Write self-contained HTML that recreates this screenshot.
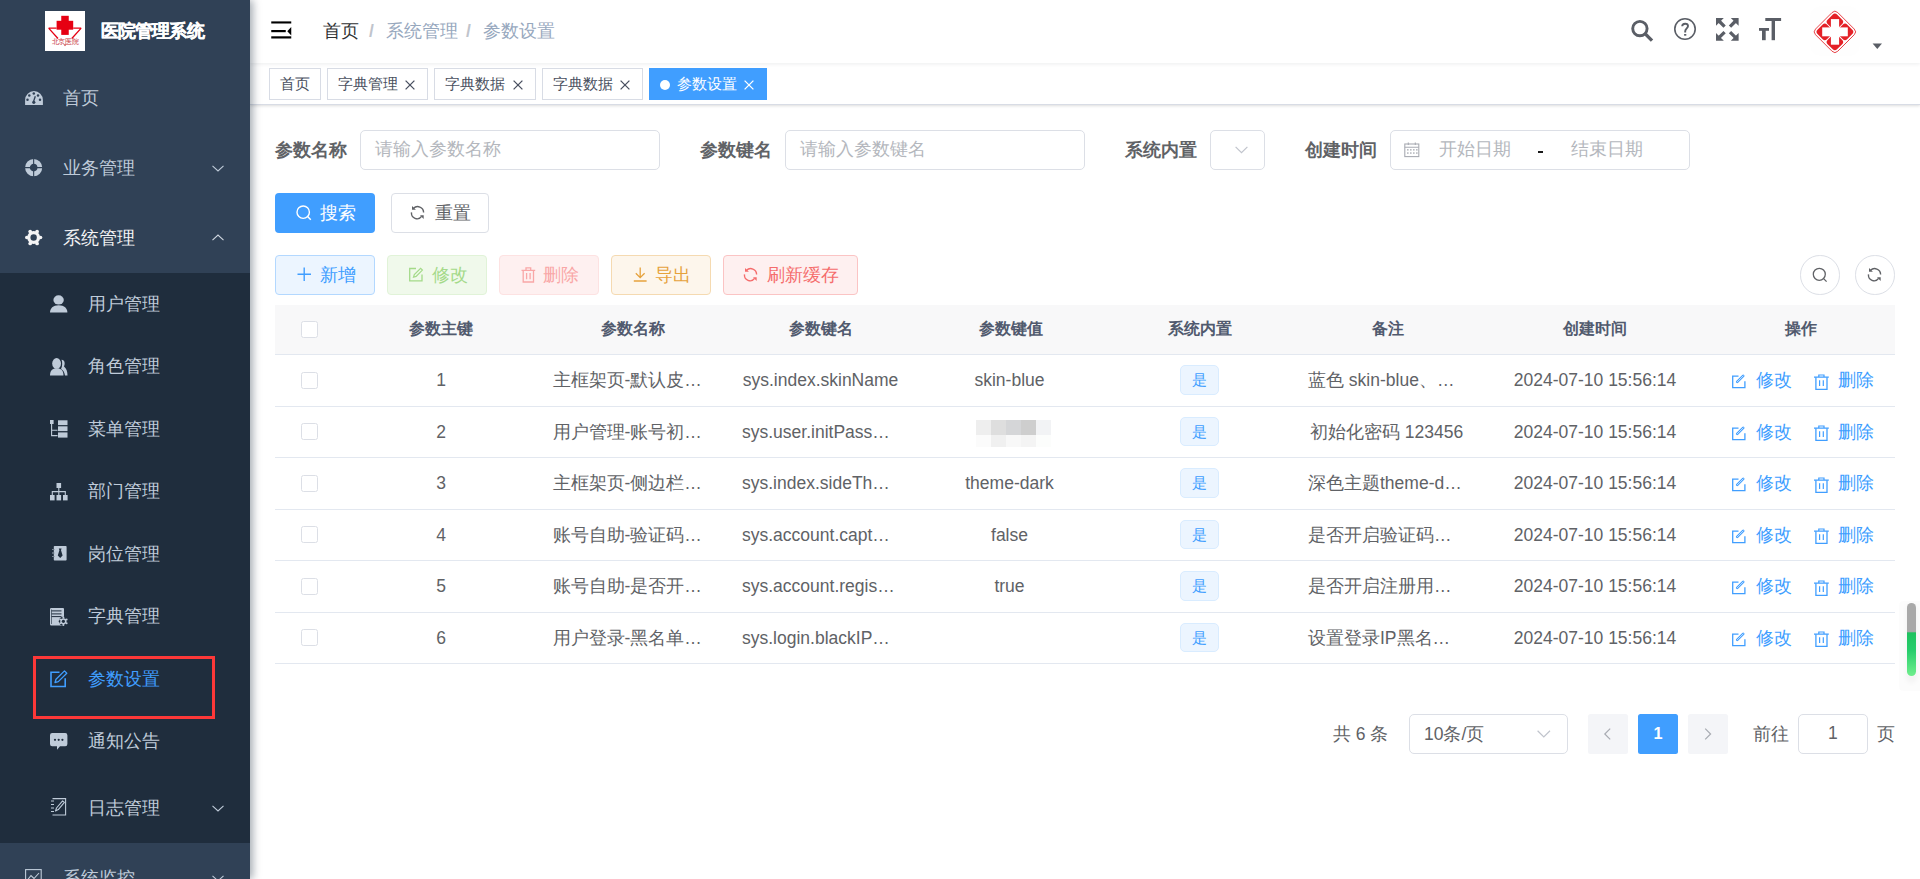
<!DOCTYPE html>
<html><head><meta charset="utf-8">
<style>
*{box-sizing:border-box;margin:0;padding:0}
html,body{width:1920px;height:879px;overflow:hidden;background:#fff;font-family:"Liberation Sans",sans-serif;}
.a{position:absolute;white-space:nowrap}
svg{position:absolute;overflow:visible}
#sb{position:absolute;left:0;top:0;width:250px;height:879px;background:#304156;box-shadow:2.5px 0 8px rgba(0,21,41,.35);z-index:5;overflow:hidden}
.mt{position:absolute;font-size:17.5px;color:#bfcbd9;line-height:20px;white-space:nowrap}
#main{position:absolute;left:0;top:0;width:1920px;height:879px}
.tag{position:absolute;top:67.5px;height:32.5px;border:1px solid #d8dce5;color:#495060;background:#fff;font-size:15px;line-height:30px;white-space:nowrap}
.tag span{position:absolute;top:0}
.lbl{position:absolute;font-size:17.5px;font-weight:bold;color:#606266;line-height:20px;white-space:nowrap}
.inp{position:absolute;height:40px;border:1px solid #dcdfe6;border-radius:5px;background:#fff}
.ph{position:absolute;font-size:17.5px;color:#b4b7bd;line-height:20px;white-space:nowrap}
.btn{position:absolute;top:255px;height:39.5px;border:1px solid;border-radius:4px}
.bt{position:absolute;font-size:17.5px;line-height:20px;white-space:nowrap}
.th{position:absolute;font-size:16.25px;font-weight:bold;color:#515a6e;line-height:20px;white-space:nowrap;transform:translateX(-50%)}
.td{position:absolute;font-size:17.5px;color:#606266;line-height:20px;white-space:nowrap;transform:translateX(-50%)}
.hl{position:absolute;left:275px;width:1620px;height:1px;background:#e3e8f0}
.cb{position:absolute;left:301px;width:17px;height:17px;border:1px solid #dcdfe6;border-radius:2.5px;background:#fff}
.yes{position:absolute;left:1180px;width:38.5px;height:29.5px;background:#ecf5ff;border:1px solid #d9ecff;border-radius:5px;color:#409eff;font-size:15px;line-height:27px;text-align:center}
.lk{position:absolute;font-size:17.5px;color:#409eff;line-height:20px;white-space:nowrap}
</style></head><body>
<div id="sb">
  <!-- logo -->
  <svg style="left:45px;top:11px" width="40" height="40" viewBox="0 0 40 40">
    <rect x="0" y="0" width="40" height="40" fill="#fff"/>
    <rect x="16.25" y="4.8" width="7.5" height="19.1" fill="#e60012"/>
    <rect x="11.6" y="9.8" width="16.6" height="8.9" fill="#e60012"/>
    <path d="M3.6 17.1 L11.6 17.1 M28.2 17.1 L36.2 17.1 M3.6 17.1 L13 27.5 M36.2 17.1 L26.8 27.5" stroke="#e60012" stroke-width="1.3" fill="none"/>
    <text x="6.5" y="32.6" font-size="6.8" fill="#c8353b" font-family="Liberation Sans, sans-serif" textLength="27">北京医院</text>
    <path d="M18.8 33.6 L21.2 33.6 L20 35.2 Z" fill="#c0272d"/>
  </svg>
  <div class="a" style="left:100.5px;top:20.5px;font-size:17.5px;font-weight:bold;color:#fff;line-height:20px;letter-spacing:-0.8px;-webkit-text-stroke:0.3px #fff">医院管理系统</div>

  <!-- 首页 -->
  <svg style="left:25px;top:90.8px" width="18" height="14" viewBox="0 0 18 14">
    <path d="M0.1 14 L0.1 9 A8.9 8.9 0 0 1 17.9 9 L17.9 14 Z" fill="#bfcbd9"/>
    <circle cx="2.5" cy="8.7" r="1.25" fill="#304156"/>
    <circle cx="4.3" cy="4.4" r="1.25" fill="#304156"/>
    <circle cx="8.8" cy="2.6" r="1.25" fill="#304156"/>
    <circle cx="13" cy="4.4" r="1.25" fill="#304156"/>
    <circle cx="15" cy="8.7" r="1.25" fill="#304156"/>
    <path d="M8.3 11.3 L10.3 5.2" stroke="#304156" stroke-width="1.3"/>
    <circle cx="8.8" cy="11.3" r="1.6" fill="#304156"/>
  </svg>
  <div class="mt" style="left:63px;top:87.5px">首页</div>

  <!-- 业务管理 -->
  <svg style="left:25px;top:158.9px" width="18" height="18" viewBox="0 0 18 18">
    <circle cx="8.65" cy="8.6" r="6.2" fill="none" stroke="#bfcbd9" stroke-width="4.8"/>
    <path d="M8.65 0 V18 M0 8.6 H18" stroke="#304156" stroke-width="1.1"/>
  </svg>
  <div class="mt" style="left:63px;top:157.5px">业务管理</div>
  <svg style="left:211.5px;top:164.5px" width="12" height="7" viewBox="0 0 12 7"><path d="M0.5 0.8 L6 6 L11.5 0.8" fill="none" stroke="#bfcbd9" stroke-width="1.1"/></svg>

  <!-- 系统管理 -->
  <svg style="left:25px;top:229px" width="18" height="18" viewBox="0 0 18 18">
    <g fill="#f4f4f5">
      <circle cx="8.65" cy="8.5" r="6.5"/>
      <circle cx="1.75" cy="8.5" r="1.75"/><circle cx="15.55" cy="8.5" r="1.75"/>
      <circle cx="5.2" cy="2.5" r="1.85"/><circle cx="12.1" cy="2.5" r="1.85"/>
      <circle cx="5.2" cy="14.5" r="1.85"/><circle cx="12.1" cy="14.5" r="1.85"/>
    </g>
    <circle cx="8.65" cy="8.5" r="3.2" fill="#304156"/>
  </svg>
  <div class="mt" style="left:63px;top:227.5px;color:#f4f4f5">系统管理</div>
  <svg style="left:211.5px;top:234px" width="12" height="7" viewBox="0 0 12 7"><path d="M0.5 6.2 L6 1 L11.5 6.2" fill="none" stroke="#d0d7e0" stroke-width="1.1"/></svg>

  <div class="a" style="left:0;top:272.5px;width:250px;height:570px;background:#1f2d3d"></div>

  <!-- 用户管理 -->
  <svg style="left:50px;top:294.5px" width="18" height="18" viewBox="0 0 18 18">
    <ellipse cx="8.6" cy="4.9" rx="5.2" ry="4.6" fill="#bfcbd9"/>
    <path d="M0 17.5 C0 13.5 3 10.3 8.7 10.3 C14.4 10.3 17.4 13.5 17.4 17.5 Z" fill="#bfcbd9"/>
  </svg>
  <div class="mt" style="left:87.5px;top:293.75px">用户管理</div>

  <!-- 角色管理 -->
  <svg style="left:50px;top:357.5px" width="18" height="18" viewBox="0 0 18 18">
    <path d="M11.5 1.8 C14.5 1.5 15.5 5.5 14 8.5 C16.5 10.5 17.5 13.5 17.5 17.5 L15 17.5 C14.5 14 13 12 11 11 C12.5 8.5 12.5 4 11.5 1.8 Z" fill="#bfcbd9"/>
    <ellipse cx="6.6" cy="5.4" rx="4.4" ry="5.3" fill="#bfcbd9"/>
    <path d="M0 17.5 C0 12.5 2.5 10.3 6.8 10.3 C11 10.3 13.5 12.5 13.5 17.5 Z" fill="#bfcbd9"/>
  </svg>
  <div class="mt" style="left:87.5px;top:356.25px">角色管理</div>

  <!-- 菜单管理 -->
  <svg style="left:50px;top:419.5px" width="18" height="18" viewBox="0 0 18 18">
    <rect x="0" y="0" width="3.6" height="4" fill="#bfcbd9"/>
    <path d="M1.6 4 V15.6 H7.5 M1.6 10.2 H7.5" stroke="#bfcbd9" stroke-width="1.1" fill="none"/>
    <rect x="8" y="0.3" width="9.5" height="4.8" fill="#bfcbd9"/>
    <rect x="8" y="6.3" width="9.5" height="4.8" fill="#bfcbd9"/>
    <rect x="8" y="12.4" width="9.5" height="5.2" fill="#bfcbd9"/>
  </svg>
  <div class="mt" style="left:87.5px;top:418.75px">菜单管理</div>

  <!-- 部门管理 -->
  <svg style="left:50px;top:482.5px" width="18" height="18" viewBox="0 0 18 18">
    <rect x="6.5" y="0" width="4.6" height="5" fill="#bfcbd9"/>
    <path d="M8.8 5 V8.6 M2.3 12 V8.6 H15.3 V12 M8.8 8.6 V12" stroke="#bfcbd9" stroke-width="1.1" fill="none"/>
    <rect x="0" y="12" width="4.6" height="5.4" fill="#bfcbd9"/>
    <rect x="6.5" y="12" width="4.6" height="5.4" fill="#bfcbd9"/>
    <rect x="13" y="12" width="4.6" height="5.4" fill="#bfcbd9"/>
  </svg>
  <div class="mt" style="left:87.5px;top:481.25px">部门管理</div>

  <!-- 岗位管理 -->
  <svg style="left:51.8px;top:546.3px" width="15" height="15" viewBox="0 0 15 15">
    <rect x="1.8" y="0" width="12.8" height="14.5" rx="0.8" fill="#bfcbd9"/>
    <path d="M0 3.5 h3 M0 7 h3 M0 10.5 h3" stroke="#bfcbd9" stroke-width="1.2"/>
    <path d="M0.2 3.5 h2.2 M0.2 7 h2.2 M0.2 10.5 h2.2" stroke="#1f2d3d" stroke-width="0.5"/>
    <path d="M6.8 2.5 h2.8 l-0.6 1.8 l1.6 5.2 l-2.4 2.6 l-2.4 -2.6 l1.6 -5.2 Z" fill="#1f2d3d"/>
  </svg>
  <div class="mt" style="left:87.5px;top:543.75px">岗位管理</div>

  <!-- 字典管理 -->
  <svg style="left:50px;top:607.6px" width="18" height="18" viewBox="0 0 18 18">
    <path d="M1.2 0 H13 A1 1 0 0 1 14 1 V17.4 H1.2 A1.2 1.2 0 0 1 0 16.2 V1.2 A1.2 1.2 0 0 1 1.2 0 Z" fill="#bfcbd9"/>
    <path d="M1.5 2.9 H11.5 M1.5 5.9 H11.5 M1.5 8.6 H11.5" stroke="#1f2d3d" stroke-width="1"/>
    <path d="M1.5 1.5 V16" stroke="#1f2d3d" stroke-width="0.6"/>
    <circle cx="13.4" cy="13.3" r="4.6" fill="#1f2d3d"/>
    <g fill="#bfcbd9">
      <circle cx="13.4" cy="13.3" r="3.1"/>
      <circle cx="13.4" cy="9.6" r="1"/><circle cx="13.4" cy="17" r="1"/>
      <circle cx="10.2" cy="11.45" r="1"/><circle cx="16.6" cy="11.45" r="1"/>
      <circle cx="10.2" cy="15.15" r="1"/><circle cx="16.6" cy="15.15" r="1"/>
    </g>
    <circle cx="13.4" cy="13.3" r="1.6" fill="#1f2d3d"/>
  </svg>
  <div class="mt" style="left:87.5px;top:606.25px">字典管理</div>

  <!-- 参数设置 (active) -->
  <svg style="left:50px;top:670.3px" width="18" height="18" viewBox="0 0 18 18">
    <path d="M9.5 2.3 H1 V16.5 H15.2 V8.2" fill="none" stroke="#409eff" stroke-width="1.6"/>
    <path d="M5 12.5 L6 9.3 L14.5 0.9 L16.8 3.2 L8.3 11.6 Z" fill="none" stroke="#409eff" stroke-width="1.3" stroke-linejoin="round"/>
  </svg>
  <div class="mt" style="left:88px;top:668.75px;color:#409eff">参数设置</div>

  <!-- 通知公告 -->
  <svg style="left:50px;top:733px" width="18" height="18" viewBox="0 0 18 18">
    <path d="M2.2 0 H15.2 A2.2 2.2 0 0 1 17.4 2.2 V11 A2.2 2.2 0 0 1 15.2 13.2 H10 L7 16.8 V13.2 H2.2 A2.2 2.2 0 0 1 0 11 V2.2 A2.2 2.2 0 0 1 2.2 0 Z" fill="#bfcbd9"/>
    <circle cx="5" cy="6.8" r="1.1" fill="#1f2d3d"/><circle cx="8.7" cy="6.8" r="1.1" fill="#1f2d3d"/><circle cx="12.4" cy="6.8" r="1.1" fill="#1f2d3d"/>
  </svg>
  <div class="mt" style="left:87.5px;top:731.25px">通知公告</div>

  <!-- 日志管理 -->
  <svg style="left:50.6px;top:798.4px" width="16" height="18" viewBox="0 0 16 18">
    <path d="M1.5 0.6 H14.6 V17 H1.5" fill="none" stroke="#bfcbd9" stroke-width="1.1"/>
    <path d="M0 3 h3 M0 6.5 h3 M0 10 h3 M0 13.5 h3" stroke="#bfcbd9" stroke-width="1"/>
    <path d="M4.5 13 L5.5 10 L11.6 2.8 L13.4 4.4 L7.3 11.6 Z" fill="none" stroke="#bfcbd9" stroke-width="1.1" stroke-linejoin="round"/>
  </svg>
  <div class="mt" style="left:88px;top:797.5px">日志管理</div>
  <svg style="left:211.5px;top:804.5px" width="12" height="7" viewBox="0 0 12 7"><path d="M0.5 0.8 L6 6 L11.5 0.8" fill="none" stroke="#bfcbd9" stroke-width="1.1"/></svg>

  <!-- 系统监控 -->
  <svg style="left:25px;top:869px" width="17" height="17" viewBox="0 0 17 17">
    <rect x="0.6" y="0.6" width="15.6" height="15.6" fill="none" stroke="#bfcbd9" stroke-width="1.1"/>
    <path d="M2.5 11 L6 6.5 L9 9.5 L14 4" fill="none" stroke="#bfcbd9" stroke-width="1.1"/>
  </svg>
  <div class="mt" style="left:63px;top:867.5px">系统监控</div>
  <svg style="left:211.5px;top:874.5px" width="12" height="7" viewBox="0 0 12 7"><path d="M0.5 0.8 L6 6 L11.5 0.8" fill="none" stroke="#bfcbd9" stroke-width="1.1"/></svg>

  <!-- red annotation -->
  <div class="a" style="left:32.8px;top:656px;width:182.3px;height:63px;border:3px solid #fd3838"></div>
</div>
<div id="main">
  <div class="a" style="left:250px;top:62.5px;width:1670px;height:42.5px;background:#fff;border-bottom:1px solid #d8dce5;box-shadow:0 1px 3px 0 rgba(0,0,0,.12),0 0 3px 0 rgba(0,0,0,.04)"></div>
  <div class="a" style="left:250px;top:0;width:1670px;height:62.5px;background:#fff;box-shadow:0 1px 4px rgba(0,21,41,.08)"></div>
  <!-- navbar -->
  <svg style="left:271px;top:20.5px" width="21" height="18" viewBox="0 0 21 18">
    <rect x="0.25" y="0.4" width="20" height="2.1" fill="#000"/>
    <rect x="0.25" y="9" width="14.5" height="2.2" fill="#000"/>
    <path d="M20.25 5.9 V14.5 L16.3 10.2 Z" fill="#000"/>
    <rect x="0.25" y="15.3" width="20" height="2.2" fill="#000"/>
  </svg>
  <div class="a" style="left:322.5px;top:20.5px;font-size:17.5px;line-height:20px;color:#303133">首页</div>
  <div class="a" style="left:369px;top:20.5px;font-size:17.5px;line-height:20px;color:#c0c4cc;font-weight:bold">/</div>
  <div class="a" style="left:385.5px;top:20.5px;font-size:17.5px;line-height:20px;color:#97a8be">系统管理</div>
  <div class="a" style="left:466px;top:20.5px;font-size:17.5px;line-height:20px;color:#c0c4cc;font-weight:bold">/</div>
  <div class="a" style="left:482.5px;top:20.5px;font-size:17.5px;line-height:20px;color:#97a8be">参数设置</div>

  <!-- right icons -->
  <svg style="left:1630px;top:19px" width="24" height="24" viewBox="0 0 24 24">
    <circle cx="9.9" cy="9.6" r="7.2" fill="none" stroke="#5a5e66" stroke-width="2.9"/>
    <path d="M14.8 14.4 L22 21.6" stroke="#5a5e66" stroke-width="3.4"/>
  </svg>
  <svg style="left:1673px;top:17px" width="24" height="24" viewBox="0 0 24 24">
    <circle cx="12" cy="12" r="10.2" fill="none" stroke="#5a5e66" stroke-width="1.6"/>
    <path d="M9.2 9.3 C9.2 7.6 10.4 6.7 12.2 6.7 C14 6.7 15 7.8 15 9.1 C15 11.2 12.2 11.6 12.2 14.2 V15.6" fill="none" stroke="#5a5e66" stroke-width="1.9"/>
    <rect x="11.1" y="17" width="2.2" height="1.7" fill="#5a5e66"/>
  </svg>
  <svg style="left:1715.8px;top:18px" width="24" height="23" viewBox="0 0 24 23">
    <g fill="#5a5e66">
      <path d="M0 0 H7.8 L0 7.8 Z"/><path d="M22.6 0 H14.8 L22.6 7.8 Z"/>
      <path d="M0 22.7 H7.8 L0 14.9 Z"/><path d="M22.6 22.7 H14.8 L22.6 14.9 Z"/>
    </g>
    <path d="M3 3 L8.6 8.6 M19.6 3 L14 8.6 M3 19.7 L8.6 14.1 M19.6 19.7 L14 14.1" stroke="#5a5e66" stroke-width="3.3"/>
  </svg>
  <svg style="left:1759px;top:18px" width="23" height="23" viewBox="0 0 23 23">
    <g fill="#5a5e66">
      <rect x="6.3" y="0" width="15.8" height="3"/>
      <rect x="12.6" y="0" width="3.4" height="22.2"/>
      <rect x="0" y="10" width="10" height="2.8"/>
      <rect x="3" y="10" width="3.7" height="12.2"/>
    </g>
  </svg>
  <!-- avatar -->
  <div class="a" style="left:1810px;top:6px;width:50px;height:50px;border-radius:12px;background:#fefefe"></div>
  <svg style="left:1810px;top:6px" width="50" height="50" viewBox="0 0 50 50">
    <g transform="rotate(45 24.9 25.9)">
      <rect x="9.2" y="10.2" width="31.4" height="31.4" rx="4" fill="none" stroke="#e42127" stroke-width="0.8"/>
      <g fill="#e42127">
        <rect x="11.1" y="12.1" width="13.3" height="13.3" rx="3"/>
        <rect x="25.4" y="12.1" width="13.3" height="13.3" rx="3"/>
        <rect x="11.1" y="26.4" width="13.3" height="13.3" rx="3"/>
        <rect x="25.4" y="26.4" width="13.3" height="13.3" rx="3"/>
      </g>
    </g>
    <rect x="20.9" y="13.1" width="8.2" height="25.6" fill="#fff"/>
    <rect x="12.2" y="21.4" width="25.6" height="8.9" fill="#fff"/>
  </svg>
  <svg style="left:1872px;top:42.5px" width="11" height="7" viewBox="0 0 11 7"><path d="M0.6 0.5 H10 L5.3 5.9 Z" fill="#5a5e66"/></svg>

  <!-- tags view -->
  <div class="tag" style="left:269px;width:52px"><span style="left:10px">首页</span></div>
  <div class="tag" style="left:327px;width:101px"><span style="left:10px">字典管理</span></div>
  <div class="tag" style="left:434px;width:102px"><span style="left:10px">字典数据</span></div>
  <div class="tag" style="left:542px;width:101px"><span style="left:10px">字典数据</span></div>
  <div class="tag" style="left:649px;width:118px;background:#409eff;border-color:#409eff;color:#fff"><span style="left:27px">参数设置</span>
    <div class="a" style="left:9.5px;top:11.2px;width:10px;height:10px;border-radius:50%;background:#fff"></div>
  </div>
  <svg style="left:404.5px;top:79.5px" width="10" height="10" viewBox="0 0 10 10"><path d="M0.6 0.6 L9.4 9.4 M9.4 0.6 L0.6 9.4" stroke="#495060" stroke-width="1.3"/></svg>
  <svg style="left:512.5px;top:79.5px" width="10" height="10" viewBox="0 0 10 10"><path d="M0.6 0.6 L9.4 9.4 M9.4 0.6 L0.6 9.4" stroke="#495060" stroke-width="1.3"/></svg>
  <svg style="left:619.5px;top:79.5px" width="10" height="10" viewBox="0 0 10 10"><path d="M0.6 0.6 L9.4 9.4 M9.4 0.6 L0.6 9.4" stroke="#495060" stroke-width="1.3"/></svg>
  <svg style="left:743.5px;top:79.5px" width="10" height="10" viewBox="0 0 10 10"><path d="M0.6 0.6 L9.4 9.4 M9.4 0.6 L0.6 9.4" stroke="#fff" stroke-width="1.3"/></svg>
  <!-- search form -->
  <div class="lbl" style="left:275px;top:140px">参数名称</div>
  <div class="inp" style="left:360px;top:130px;width:300px"></div>
  <div class="ph" style="left:374.5px;top:139px">请输入参数名称</div>
  <div class="lbl" style="left:700px;top:140px">参数键名</div>
  <div class="inp" style="left:785px;top:130px;width:300px"></div>
  <div class="ph" style="left:799.5px;top:139px">请输入参数键名</div>
  <div class="lbl" style="left:1125px;top:140px">系统内置</div>
  <div class="inp" style="left:1210px;top:130px;width:55px"></div>
  <svg style="left:1235px;top:146px" width="13" height="8" viewBox="0 0 13 8"><path d="M0.6 0.8 L6.5 6.7 L12.4 0.8" fill="none" stroke="#c0c4cc" stroke-width="1.2"/></svg>
  <div class="lbl" style="left:1305px;top:140px">创建时间</div>
  <div class="inp" style="left:1390px;top:130px;width:300px"></div>
  <svg style="left:1403.5px;top:142px" width="16" height="16" viewBox="0 0 16 16">
    <rect x="0.8" y="2" width="14" height="12.6" fill="none" stroke="#a8abb2" stroke-width="1.1"/>
    <path d="M0.8 5.2 H14.8 M4.3 0.6 V3 M11.3 0.6 V3" stroke="#a8abb2" stroke-width="1.1"/>
    <g fill="#a8abb2"><rect x="3" y="7.2" width="1.6" height="1.3"/><rect x="6" y="7.2" width="1.6" height="1.3"/><rect x="9" y="7.2" width="1.6" height="1.3"/><rect x="12" y="7.2" width="1.6" height="1.3"/><rect x="3" y="10.4" width="1.6" height="1.3"/><rect x="6" y="10.4" width="1.6" height="1.3"/><rect x="9" y="10.4" width="1.6" height="1.3"/><rect x="12" y="10.4" width="1.6" height="1.3"/></g>
  </svg>
  <div class="ph" style="left:1438.5px;top:139px">开始日期</div>
  <div class="a" style="left:1537.5px;top:150.8px;width:5.5px;height:2.2px;background:#1a1a1a"></div>
  <div class="ph" style="left:1571px;top:139px">结束日期</div>

  <!-- search buttons -->
  <div class="a" style="left:275px;top:193px;width:100px;height:40px;background:#409eff;border-radius:4px"></div>
  <svg style="left:295.5px;top:205px" width="16" height="16" viewBox="0 0 16 16"><circle cx="7.2" cy="7.2" r="6.2" fill="none" stroke="#fff" stroke-width="1.4"/><path d="M11.6 11.6 L14.8 14.8" stroke="#fff" stroke-width="1.4"/></svg>
  <div class="bt" style="left:320px;top:203px;color:#fff">搜索</div>
  <div class="a" style="left:390.5px;top:193px;width:98px;height:40px;background:#fff;border:1px solid #dcdfe6;border-radius:4px"></div>
  <svg style="left:405.3px;top:199.8px" width="25" height="26" viewBox="0 0 25 26">
    <path d="M18.6 12.5 A5.9 5.9 0 0 0 8.4 8.5" fill="none" stroke="#606266" stroke-width="1.4"/>
    <path d="M7 6.1 V9.8 H10.9 Z" fill="#606266"/>
    <path d="M6.5 12.4 A5.6 5.6 0 0 0 16.6 16.4" fill="none" stroke="#606266" stroke-width="1.4"/>
    <path d="M15 15.3 H18.7 V19 Z" fill="#606266"/>
  </svg>
  <div class="bt" style="left:435px;top:203px;color:#606266">重置</div>

  <!-- toolbar buttons -->
  <div class="btn" style="left:275px;width:100px;background:#ecf5ff;border-color:#b3d8ff"></div>
  <svg style="left:296.5px;top:267px" width="15" height="15" viewBox="0 0 15 15"><path d="M7.2 0.5 V14 M0.5 7.2 H14" stroke="#409eff" stroke-width="1.4"/></svg>
  <div class="bt" style="left:320px;top:264.5px;color:#409eff">新增</div>

  <div class="btn" style="left:387px;width:100px;background:#f0f9eb;border-color:#e1f3d8"></div>
  <svg style="left:409px;top:267px" width="15" height="15" viewBox="0 0 15 15">
    <path d="M7 1.5 H0.7 V13.8 H13 V7.5" fill="none" stroke="#a4da89" stroke-width="1.3"/>
    <path d="M4.5 10.2 L5.3 7.6 L11.6 1.3 L13.4 3.1 L7.1 9.4 Z" fill="none" stroke="#a4da89" stroke-width="1.2"/>
  </svg>
  <div class="bt" style="left:432px;top:264.5px;color:#a4da89">修改</div>

  <div class="btn" style="left:499px;width:100px;background:#fef0f0;border-color:#fde2e2"></div>
  <svg style="left:520.5px;top:266.5px" width="15" height="16" viewBox="0 0 15 16">
    <path d="M0.5 3.3 H14.2 M5 3.3 V0.9 H9.7 V3.3" fill="none" stroke="#f9a7a7" stroke-width="1.3"/>
    <path d="M2.2 3.3 V15 H12.5 V3.3" fill="none" stroke="#f9a7a7" stroke-width="1.3"/>
    <path d="M5.6 6 V12.3 M9.1 6 V12.3" stroke="#f9a7a7" stroke-width="1.3"/>
  </svg>
  <div class="bt" style="left:543px;top:264.5px;color:#f9a7a7">删除</div>

  <div class="btn" style="left:611px;width:100px;background:#fdf6ec;border-color:#f5dab1"></div>
  <svg style="left:632.5px;top:267px" width="15" height="15" viewBox="0 0 15 15">
    <path d="M7.2 0.5 V10.5 M2.8 6.3 L7.2 10.6 L11.6 6.3 M0.8 14 H13.6" fill="none" stroke="#e6a23c" stroke-width="1.3"/>
  </svg>
  <div class="bt" style="left:655px;top:264.5px;color:#e6a23c">导出</div>

  <div class="btn" style="left:723px;width:135px;background:#fef0f0;border-color:#fbc4c4"></div>
  <svg style="left:738px;top:261.5px" width="25" height="26" viewBox="0 0 25 26">
    <path d="M18.6 12.5 A5.9 5.9 0 0 0 8.4 8.5" fill="none" stroke="#f56c6c" stroke-width="1.4"/>
    <path d="M7 6.1 V9.8 H10.9 Z" fill="#f56c6c"/>
    <path d="M6.5 12.4 A5.6 5.6 0 0 0 16.6 16.4" fill="none" stroke="#f56c6c" stroke-width="1.4"/>
    <path d="M15 15.3 H18.7 V19 Z" fill="#f56c6c"/>
  </svg>
  <div class="bt" style="left:767px;top:264.5px;color:#f56c6c">刷新缓存</div>

  <!-- right circle buttons -->
  <div class="a" style="left:1800px;top:255px;width:39.5px;height:39.5px;border:1px solid #dcdfe6;border-radius:50%"></div>
  <svg style="left:1812px;top:267px" width="16" height="16" viewBox="0 0 16 16"><circle cx="7.3" cy="7.3" r="6" fill="none" stroke="#606266" stroke-width="1.3"/><path d="M11.6 11.6 L14.6 14.6" stroke="#606266" stroke-width="1.3"/></svg>
  <div class="a" style="left:1855px;top:255px;width:39.5px;height:39.5px;border:1px solid #dcdfe6;border-radius:50%"></div>
  <svg style="left:1861.8px;top:262px" width="25" height="26" viewBox="0 0 25 26">
    <path d="M18.6 12.5 A5.9 5.9 0 0 0 8.4 8.5" fill="none" stroke="#606266" stroke-width="1.4"/>
    <path d="M7 6.1 V9.8 H10.9 Z" fill="#606266"/>
    <path d="M6.5 12.4 A5.6 5.6 0 0 0 16.6 16.4" fill="none" stroke="#606266" stroke-width="1.4"/>
    <path d="M15 15.3 H18.7 V19 Z" fill="#606266"/>
  </svg>
  <!-- table -->
  <div class="a" style="left:275px;top:305px;width:1620px;height:49.5px;background:#f8f8f9"></div>
  <div class="cb" style="top:321px"></div>
  <div class="th" style="left:441px;top:318px">参数主键</div>
  <div class="th" style="left:632.5px;top:318px">参数名称</div>
  <div class="th" style="left:821px;top:318px">参数键名</div>
  <div class="th" style="left:1010.5px;top:318px">参数键值</div>
  <div class="th" style="left:1199.5px;top:318px">系统内置</div>
  <div class="th" style="left:1388px;top:318px">备注</div>
  <div class="th" style="left:1595px;top:318px">创建时间</div>
  <div class="th" style="left:1801px;top:318px">操作</div>
  <div class="hl" style="top:354px"></div>
  <div class="hl" style="top:405.5px"></div>
  <div class="hl" style="top:457px"></div>
  <div class="hl" style="top:508.5px"></div>
  <div class="hl" style="top:560px"></div>
  <div class="hl" style="top:611.5px"></div>
  <div class="hl" style="top:663px"></div>
  <div class="cb" style="top:371.5px"></div>
  <div class="td" style="left:441px;top:370.0px">1</div>
  <div class="td" style="left:552.5px;top:370.0px;transform:none">主框架页-默认皮…</div>
  <div class="td" style="left:820.5px;top:370.0px">sys.index.skinName</div>
  <div class="td" style="left:1009.5px;top:370.0px">skin-blue</div>
  <div class="td" style="left:1308px;top:370.0px;transform:none">蓝色 skin-blue、…</div>
  <div class="yes" style="top:365.0px">是</div>
  <div class="td" style="left:1595px;top:370.0px">2024-07-10 15:56:14</div>
  <svg style="left:1731.5px;top:374.0px" width="15" height="15" viewBox="0 0 15 15"><path d="M6.5 2.2 H0.7 V13.6 H12.9 V7.2" fill="none" stroke="#409eff" stroke-width="1.3"/><path d="M5.2 7.9 L11.2 1.9" stroke="#409eff" stroke-width="2.6" stroke-linecap="round"/><path d="M5.2 7.9 L11.2 1.9" stroke="#fff" stroke-width="0.7" stroke-linecap="round"/></svg>
  <div class="lk" style="left:1755.5px;top:370.0px">修改</div>
  <svg style="left:1813.5px;top:373.5px" width="15" height="15" viewBox="0 0 15 15"><path d="M0 3.2 H14.8 M4.8 3.2 V1 H10 V3.2" fill="none" stroke="#409eff" stroke-width="1.2"/><path d="M1.9 3.2 V15.4 H13 V3.2" fill="none" stroke="#409eff" stroke-width="1.3"/><path d="M5.6 6.3 V12 M9.3 6.3 V12" stroke="#409eff" stroke-width="1.2"/></svg>
  <div class="lk" style="left:1837.5px;top:370.0px">删除</div>
  <div class="cb" style="top:423.0px"></div>
  <div class="td" style="left:441px;top:421.5px">2</div>
  <div class="td" style="left:552.5px;top:421.5px;transform:none">用户管理-账号初…</div>
  <div class="td" style="left:742px;top:421.5px;transform:none">sys.user.initPass…</div>
  <div class="td" style="left:1386.5px;top:421.5px">初始化密码 123456</div>
  <div class="yes" style="top:416.5px">是</div>
  <div class="td" style="left:1595px;top:421.5px">2024-07-10 15:56:14</div>
  <svg style="left:1731.5px;top:425.5px" width="15" height="15" viewBox="0 0 15 15"><path d="M6.5 2.2 H0.7 V13.6 H12.9 V7.2" fill="none" stroke="#409eff" stroke-width="1.3"/><path d="M5.2 7.9 L11.2 1.9" stroke="#409eff" stroke-width="2.6" stroke-linecap="round"/><path d="M5.2 7.9 L11.2 1.9" stroke="#fff" stroke-width="0.7" stroke-linecap="round"/></svg>
  <div class="lk" style="left:1755.5px;top:421.5px">修改</div>
  <svg style="left:1813.5px;top:425.0px" width="15" height="15" viewBox="0 0 15 15"><path d="M0 3.2 H14.8 M4.8 3.2 V1 H10 V3.2" fill="none" stroke="#409eff" stroke-width="1.2"/><path d="M1.9 3.2 V15.4 H13 V3.2" fill="none" stroke="#409eff" stroke-width="1.3"/><path d="M5.6 6.3 V12 M9.3 6.3 V12" stroke="#409eff" stroke-width="1.2"/></svg>
  <div class="lk" style="left:1837.5px;top:421.5px">删除</div>
  <div class="cb" style="top:474.5px"></div>
  <div class="td" style="left:441px;top:473.0px">3</div>
  <div class="td" style="left:552.5px;top:473.0px;transform:none">主框架页-侧边栏…</div>
  <div class="td" style="left:742px;top:473.0px;transform:none">sys.index.sideTh…</div>
  <div class="td" style="left:1009.5px;top:473.0px">theme-dark</div>
  <div class="td" style="left:1308px;top:473.0px;transform:none">深色主题theme-d…</div>
  <div class="yes" style="top:468.0px">是</div>
  <div class="td" style="left:1595px;top:473.0px">2024-07-10 15:56:14</div>
  <svg style="left:1731.5px;top:477.0px" width="15" height="15" viewBox="0 0 15 15"><path d="M6.5 2.2 H0.7 V13.6 H12.9 V7.2" fill="none" stroke="#409eff" stroke-width="1.3"/><path d="M5.2 7.9 L11.2 1.9" stroke="#409eff" stroke-width="2.6" stroke-linecap="round"/><path d="M5.2 7.9 L11.2 1.9" stroke="#fff" stroke-width="0.7" stroke-linecap="round"/></svg>
  <div class="lk" style="left:1755.5px;top:473.0px">修改</div>
  <svg style="left:1813.5px;top:476.5px" width="15" height="15" viewBox="0 0 15 15"><path d="M0 3.2 H14.8 M4.8 3.2 V1 H10 V3.2" fill="none" stroke="#409eff" stroke-width="1.2"/><path d="M1.9 3.2 V15.4 H13 V3.2" fill="none" stroke="#409eff" stroke-width="1.3"/><path d="M5.6 6.3 V12 M9.3 6.3 V12" stroke="#409eff" stroke-width="1.2"/></svg>
  <div class="lk" style="left:1837.5px;top:473.0px">删除</div>
  <div class="cb" style="top:526.0px"></div>
  <div class="td" style="left:441px;top:524.5px">4</div>
  <div class="td" style="left:552.5px;top:524.5px;transform:none">账号自助-验证码…</div>
  <div class="td" style="left:742px;top:524.5px;transform:none">sys.account.capt…</div>
  <div class="td" style="left:1009.5px;top:524.5px">false</div>
  <div class="td" style="left:1308px;top:524.5px;transform:none">是否开启验证码…</div>
  <div class="yes" style="top:519.5px">是</div>
  <div class="td" style="left:1595px;top:524.5px">2024-07-10 15:56:14</div>
  <svg style="left:1731.5px;top:528.5px" width="15" height="15" viewBox="0 0 15 15"><path d="M6.5 2.2 H0.7 V13.6 H12.9 V7.2" fill="none" stroke="#409eff" stroke-width="1.3"/><path d="M5.2 7.9 L11.2 1.9" stroke="#409eff" stroke-width="2.6" stroke-linecap="round"/><path d="M5.2 7.9 L11.2 1.9" stroke="#fff" stroke-width="0.7" stroke-linecap="round"/></svg>
  <div class="lk" style="left:1755.5px;top:524.5px">修改</div>
  <svg style="left:1813.5px;top:528.0px" width="15" height="15" viewBox="0 0 15 15"><path d="M0 3.2 H14.8 M4.8 3.2 V1 H10 V3.2" fill="none" stroke="#409eff" stroke-width="1.2"/><path d="M1.9 3.2 V15.4 H13 V3.2" fill="none" stroke="#409eff" stroke-width="1.3"/><path d="M5.6 6.3 V12 M9.3 6.3 V12" stroke="#409eff" stroke-width="1.2"/></svg>
  <div class="lk" style="left:1837.5px;top:524.5px">删除</div>
  <div class="cb" style="top:577.5px"></div>
  <div class="td" style="left:441px;top:576.0px">5</div>
  <div class="td" style="left:552.5px;top:576.0px;transform:none">账号自助-是否开…</div>
  <div class="td" style="left:742px;top:576.0px;transform:none">sys.account.regis…</div>
  <div class="td" style="left:1009.5px;top:576.0px">true</div>
  <div class="td" style="left:1308px;top:576.0px;transform:none">是否开启注册用…</div>
  <div class="yes" style="top:571.0px">是</div>
  <div class="td" style="left:1595px;top:576.0px">2024-07-10 15:56:14</div>
  <svg style="left:1731.5px;top:580.0px" width="15" height="15" viewBox="0 0 15 15"><path d="M6.5 2.2 H0.7 V13.6 H12.9 V7.2" fill="none" stroke="#409eff" stroke-width="1.3"/><path d="M5.2 7.9 L11.2 1.9" stroke="#409eff" stroke-width="2.6" stroke-linecap="round"/><path d="M5.2 7.9 L11.2 1.9" stroke="#fff" stroke-width="0.7" stroke-linecap="round"/></svg>
  <div class="lk" style="left:1755.5px;top:576.0px">修改</div>
  <svg style="left:1813.5px;top:579.5px" width="15" height="15" viewBox="0 0 15 15"><path d="M0 3.2 H14.8 M4.8 3.2 V1 H10 V3.2" fill="none" stroke="#409eff" stroke-width="1.2"/><path d="M1.9 3.2 V15.4 H13 V3.2" fill="none" stroke="#409eff" stroke-width="1.3"/><path d="M5.6 6.3 V12 M9.3 6.3 V12" stroke="#409eff" stroke-width="1.2"/></svg>
  <div class="lk" style="left:1837.5px;top:576.0px">删除</div>
  <div class="cb" style="top:629.0px"></div>
  <div class="td" style="left:441px;top:627.5px">6</div>
  <div class="td" style="left:552.5px;top:627.5px;transform:none">用户登录-黑名单…</div>
  <div class="td" style="left:742px;top:627.5px;transform:none">sys.login.blackIP…</div>
  <div class="td" style="left:1308px;top:627.5px;transform:none">设置登录IP黑名…</div>
  <div class="yes" style="top:622.5px">是</div>
  <div class="td" style="left:1595px;top:627.5px">2024-07-10 15:56:14</div>
  <svg style="left:1731.5px;top:631.5px" width="15" height="15" viewBox="0 0 15 15"><path d="M6.5 2.2 H0.7 V13.6 H12.9 V7.2" fill="none" stroke="#409eff" stroke-width="1.3"/><path d="M5.2 7.9 L11.2 1.9" stroke="#409eff" stroke-width="2.6" stroke-linecap="round"/><path d="M5.2 7.9 L11.2 1.9" stroke="#fff" stroke-width="0.7" stroke-linecap="round"/></svg>
  <div class="lk" style="left:1755.5px;top:627.5px">修改</div>
  <svg style="left:1813.5px;top:631.0px" width="15" height="15" viewBox="0 0 15 15"><path d="M0 3.2 H14.8 M4.8 3.2 V1 H10 V3.2" fill="none" stroke="#409eff" stroke-width="1.2"/><path d="M1.9 3.2 V15.4 H13 V3.2" fill="none" stroke="#409eff" stroke-width="1.3"/><path d="M5.6 6.3 V12 M9.3 6.3 V12" stroke="#409eff" stroke-width="1.2"/></svg>
  <div class="lk" style="left:1837.5px;top:627.5px">删除</div>
  <div class="a" style="left:975.5px;top:420px;width:15px;height:15px;background:#eeeeee"></div>
  <div class="a" style="left:975.5px;top:435px;width:15px;height:12px;background:#fbfbfb"></div>
  <div class="a" style="left:990.5px;top:420px;width:15px;height:15px;background:#dedede"></div>
  <div class="a" style="left:990.5px;top:435px;width:15px;height:12px;background:#f0f0f0"></div>
  <div class="a" style="left:1005.5px;top:420px;width:15px;height:15px;background:#d5d6d8"></div>
  <div class="a" style="left:1005.5px;top:435px;width:15px;height:12px;background:#f8f8f8"></div>
  <div class="a" style="left:1020.5px;top:420px;width:15px;height:15px;background:#cecece"></div>
  <div class="a" style="left:1020.5px;top:435px;width:15px;height:12px;background:#f4f4f4"></div>
  <div class="a" style="left:1035.5px;top:420px;width:15px;height:15px;background:#f2f3f5"></div>
  <div class="a" style="left:1035.5px;top:435px;width:15px;height:12px;background:#fcfdfc"></div>
  <!-- pagination -->
  <div class="a" style="left:1333px;top:724px;font-size:17.5px;line-height:20px;color:#606266">共 6 条</div>
  <div class="inp" style="left:1408.5px;top:714px;width:159px;height:39.5px"></div>
  <div class="a" style="left:1424px;top:724px;font-size:17.5px;line-height:20px;color:#606266">10条/页</div>
  <svg style="left:1536.5px;top:729.5px" width="14" height="8" viewBox="0 0 14 8"><path d="M0.6 0.8 L6.8 6.9 L13 0.8" fill="none" stroke="#c0c4cc" stroke-width="1.2"/></svg>
  <div class="a" style="left:1588px;top:714px;width:40px;height:39.5px;background:#f4f5f8;border-radius:2.5px"></div>
  <svg style="left:1603.5px;top:728px" width="8" height="12" viewBox="0 0 8 12"><path d="M6.2 0.6 L0.8 6 L6.2 11.4" fill="none" stroke="#a8abb2" stroke-width="1.2"/></svg>
  <div class="a" style="left:1638px;top:714px;width:40px;height:39.5px;background:#409eff;border-radius:2.5px;color:#fff;font-size:16.25px;font-weight:bold;line-height:39.5px;text-align:center">1</div>
  <div class="a" style="left:1688px;top:714px;width:40px;height:39.5px;background:#f4f5f8;border-radius:2.5px"></div>
  <svg style="left:1704px;top:728px" width="8" height="12" viewBox="0 0 8 12"><path d="M1.2 0.6 L6.6 6 L1.2 11.4" fill="none" stroke="#a8abb2" stroke-width="1.2"/></svg>
  <div class="a" style="left:1752.5px;top:724px;font-size:17.5px;line-height:20px;color:#606266">前往</div>
  <div class="inp" style="left:1798px;top:714px;width:69.5px;height:39.5px"></div>
  <div class="a" style="left:1798px;top:722.5px;width:69.5px;font-size:17.5px;line-height:20px;color:#606266;text-align:center">1</div>
  <div class="a" style="left:1877px;top:724px;font-size:17.5px;line-height:20px;color:#606266">页</div>

  <!-- floating widget -->
  <div class="a" style="left:1899px;top:600.5px;width:21px;height:90.5px;background:rgba(0,0,0,0.012);border-radius:4px 0 0 4px"></div>
  <div class="a" style="left:1905.5px;top:604px;width:11.5px;height:79px;border-radius:6px;background:rgba(0,0,0,0.03);filter:blur(2px)"></div>
  <div class="a" style="left:1907px;top:602.5px;width:9px;height:73px;border-radius:4.5px;background:linear-gradient(to bottom,#a9a9a9 0%,#a9a9a9 39%,#1fc25f 41%,#27cd6c 65%,#70ef8d 100%)"></div>
</div></body></html>
